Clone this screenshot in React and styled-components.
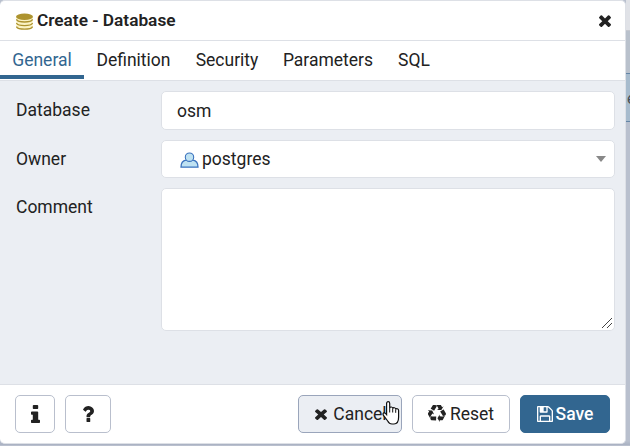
import React from "react";
import styled, { createGlobalStyle } from "styled-components";

const GlobalStyle = createGlobalStyle`
  * { box-sizing: border-box; }
  body { margin: 0; overflow: hidden; background: #c3c9d5; }
  body, button, input, textarea { font-family: Roboto, "Liberation Sans", sans-serif; font-size: 17.5px; color: #222; }
`;

const Screen = styled.div`
  display: grid;
  grid-template-columns: 626px 4px;
  width: 630px;
  height: 446px;
  overflow: hidden;
  background: linear-gradient(#b9c0ce 0 441px, #a9b1c2 445px, #c9ced9 446px);
`;

const Dialog = styled.div`
  display: flex;
  flex-direction: column;
  width: 626px;
  height: 444px;
  background: #fff;
  border: 1px solid #dde0e6;
  border-left: 0;
  border-radius: 5px;
  overflow: hidden;
`;

const Header = styled.header`
  display: flex;
  align-items: center;
  height: 40px;
  flex: none;
  padding: 0 14px 1px 16px;
  border-bottom: 1px solid #dde0e6;
`;

const Title = styled.h1`
  flex: 1;
  margin: 0 0 0 4px;
  font-size: 17.25px;
  line-height: 38px;
  font-weight: 600;
  white-space: nowrap;
`;

const IconButton = styled.button`
  display: flex;
  padding: 0;
  border: 0;
  background: none;
`;

const Tabs = styled.nav`
  display: flex;
  height: 40px;
  flex: none;
  border-bottom: 1px solid #dde0e6;
`;

const Tab = styled.button`
  height: 38px;
  width: ${(p) => p.$width}px;
  padding: 4px 0 0;
  border: 0;
  border-bottom: 4px solid ${(p) => (p.$active ? "#326690" : "transparent")};
  background: none;
  line-height: 30px;
  color: ${(p) => (p.$active ? "#326690" : "#222")};
  white-space: nowrap;
`;

const Form = styled.main`
  display: flex;
  flex-direction: column;
  gap: 10px;
  flex: 1;
  padding: 10px 10px 0 16px;
  background: #ebeef3;
`;

const Field = styled.div`
  display: grid;
  grid-template-columns: 145px 454px;
  align-items: start;
`;

const Label = styled.label`
  line-height: 38px;
`;

const TextInput = styled.input`
  height: 39px;
  padding: 1px 15px 0;
  border: 1px solid #dde0e6;
  border-radius: 5px;
  outline: 0;
  background: #fff;
`;

const Select = styled.div`
  display: flex;
  align-items: center;
  height: 38px;
  padding: 0 8px 0 18px;
  border: 1px solid #dde0e6;
  border-radius: 5px;
  background: #fff;

  > svg:first-child { margin-top: 2px; }
`;

const SelectValue = styled.span`
  flex: 1;
  margin-left: 3px;
  padding-bottom: 1px;
`;

const Comment = styled.div`
  display: flex;
  justify-content: flex-end;
  align-items: flex-end;
  height: 143px;
  padding: 2px;
  border: 1px solid #dde0e6;
  border-radius: 5px;
  background: #fff;
`;

const Footer = styled.footer`
  display: flex;
  gap: 10px;
  height: 59px;
  flex: none;
  padding: 10px 15px;
  border-top: 1px solid #dde0e6;
`;

const Button = styled.button`
  display: flex;
  align-items: center;
  justify-content: center;
  gap: ${(p) => p.$gap ?? 4}px;
  width: ${(p) => p.$width}px;
  height: 38px;
  padding: 0 0 1px ${(p) => (p.$hover ? 2 : 0)}px;
  border: 1px solid ${(p) => (p.$primary ? "#326690" : p.$hover ? "#9aa5bb" : "#b9bfcd")};
  border-radius: 5px;
  background: ${(p) => (p.$primary ? "#326690" : p.$hover ? "#ebeef3" : "#fff")};
  color: ${(p) => (p.$primary ? "#fff" : "#222")};
  font-weight: ${(p) => (p.$primary ? 500 : 400)};
  white-space: nowrap;
`;

const Spacer = styled.div`
  flex: 1;
`;

const Pointer = styled.svg`
  position: absolute;
  left: 382px;
  top: 400px;
`;

const Backdrop = styled.aside`
  display: flex;
  flex-direction: column;
  overflow: hidden;
`;

const BackdropBar = styled.div`
  height: 31px;
  background: #e0e2e7;
  border-bottom: 1px solid #c5c8cf;
`;

const BackdropGap = styled.div`
  height: 42px;
  background: #b9c1cc;
`;

const BackdropTab = styled.div`
  height: 49px;
  border: solid #6485a6;
  border-width: 1px 0;
  background: #a7bbcd;
  color: #4b5057;
  line-height: 49px;
  font-size: 16px;
  text-indent: 1px;
`;

const glyphs = {
  times: "M1490 1322q0 40-28 68l-136 136q-28 28-68 28t-68-28l-294-294-294 294q-28 28-68 28t-68-28l-136-136q-28-28-28-68t28-68l294-294-294-294q-28-28-28-68t28-68l136-136q28-28 68-28t68 28l294 294 294-294q28-28 68-28t68 28l136 136q28 28 28 68t-28 68l-294 294 294 294q28 28 28 68z",
  save: "M512 1536h768v-384h-768v384zm896 0h128v-896q0-14-10-38.5t-20-34.5l-281-281q-10-10-34-20t-39-10v416q0 40-28 68t-68 28h-576q-40 0-68-28t-28-68v-416h-128v1280h128v-416q0-40 28-68t68-28h832q40 0 68 28t28 68v416zm-384-928v-320q0-13-9.5-22.5t-22.5-9.5h-192q-13 0-22.5 9.5t-9.5 22.5v320q0 13 9.5 22.5t22.5 9.5h192q13 0 22.5-9.5t9.5-22.5zm640 32v928q0 40-28 68t-68 28h-1344q-40 0-68-28t-28-68v-1344q0-40 28-68t68-28h928q40 0 88 20t76 48l280 280q28 28 48 76t20 88z",
  info: "M1216 1344v128q0 26-19 45t-45 19h-512q-26 0-45-19t-19-45v-128q0-26 19-45t45-19h64v-384h-64q-26 0-45-19t-19-45v-128q0-26 19-45t45-19h384q26 0 45 19t19 45v576h64q26 0 45 19t19 45zm-128-1152v192q0 26-19 45t-45 19h-256q-26 0-45-19t-19-45v-192q0-26 19-45t45-19h256q26 0 45 19t19 45z",
  question: "M1088 1256v240q0 16-12 28t-28 12h-240q-16 0-28-12t-12-28v-240q0-16 12-28t28-12h240q16 0 28 12t12 28zm316-600q0 54-15.5 101t-35 76.5-55 59.5-57.5 43.5-61 35.5q-41 23-68.5 65t-27.5 67q0 17-12 32.5t-28 15.5h-240q-15 0-25.5-18.5t-10.5-37.5v-45q0-83 65-156.5t143-108.5q59-27 84-56t25-76q0-42-46.5-74t-107.5-32q-65 0-108 29-35 25-107 115-13 16-31 16-12 0-25-8l-164-125q-13-10-15.5-25t5.5-28q160-266 464-266 80 0 161 31t146 83 106 127.5 41 158.5z",
  recycle: "M836 1169l-15 368-2 22-420-29q-36-3-67-31.5t-47-65.5q-11-27-14.5-55t4-65 12-55 21.5-64 19-53q78 12 509 28zm-387-586l180 379-147-92q-63 72-111.5 144.5t-72.5 125-39.5 94.5-18.5 63l-4 21-190-357q-17-26-18-56t6-47l8-18q35-63 114-188l-140-86zm1231 517l-188 359q-12 29-36.5 46.5t-43.5 20.5l-18 4q-71 7-219 12l8 164-230-367 211-362 7 173q170 16 283 5t170-33zm-785-924q-47 63-265 435l-317-187-19-12 225-356q20-31 60-45t80-10q24 2 48.5 12t42 21 41.5 33 36 34.5 36 39.500 32 35zm655 307l212 363q18 37 12.5 76t-27.5 74q-13 20-33 37t-38 28-48.5 22-47 16-51.5 14-46 12q-34-72-265-436l313-195zm-143-226l142-83-220 373-419-20 151-86q-34-89-75-166t-75.5-123.5-64.5-80-47-46.5l-17-13 405 1q31-3 58 10.5t39 28.5l11 15q39 61 112 190z",
};

const boxes = {
  times: [302, 238, 1188, 1316],
  save: [128, 128, 1536, 1536],
  info: [576, 128, 640, 1408],
  question: [384, 256, 1024, 1280],
  recycle: [40, 50, 1740, 1650],
};

function Glyph({ name, width, height }) {
  return (
    <svg width={width} height={height} viewBox={boxes[name].join(" ")} preserveAspectRatio="none" fill="currentColor">
      <path d={glyphs[name]} />
    </svg>
  );
}

function DatabaseIcon() {
  return (
    <svg width="17" height="19" viewBox="0 -2.5 17 19">
      <path d="M.4 3v10c0 4 16.200 4 16.200 0V3z" fill="#fbf3c4" />
      <ellipse cx="8.5" cy="3.2" rx="8.5" ry="3.2" fill="#ad932f" />
      <path d="M.4 5.800c1.200 3.600 15 3.600 16.200 0M.4 9.400c1.200 3.600 15 3.600 16.200 0M.4 13c1.200 3.600 15 3.600 16.200 0" fill="none" stroke="#ad932f" strokeWidth="1.300" />
    </svg>
  );
}

function UserIcon() {
  return (
    <svg width="19" height="16" viewBox="0 0 19 16">
      <path d="M1 15.2c0-4 2.1-6.7 5-7.1 2 1.5 5 1.5 7 0 2.9.4 5 3.1 5 7.1z" fill="#bfe2f2" stroke="#3b72bd" strokeWidth="1.3" />
      <circle cx="9.5" cy="5.2" r="4.2" fill="#bfe2f2" stroke="#3b72bd" strokeWidth="1.1" />
    </svg>
  );
}

const tabs = [["General", 84], ["Definition", 99], ["Security", 88], ["Parameters", 114], ["SQL", 58]];

export default function App() {
  return (
    <>
      <GlobalStyle />
      <Screen>
        <Dialog>
          <Header>
            <DatabaseIcon />
            <Title>Create - Database</Title>
            <IconButton aria-label="Close"><Glyph name="times" width={12} height={13} /></IconButton>
          </Header>
          <Tabs>
            {tabs.map(([name, width], i) => <Tab key={name} $width={width} $active={i === 0}>{name}</Tab>)}
          </Tabs>
          <Form>
            <Field>
              <Label>Database</Label>
              <TextInput defaultValue="osm" />
            </Field>
            <Field>
              <Label>Owner</Label>
              <Select>
                <UserIcon />
                <SelectValue>postgres</SelectValue>
                <svg width="10" height="6"><path d="M0 0h10L5 6z" fill="#888" /></svg>
              </Select>
            </Field>
            <Field>
              <Label>Comment</Label>
              <Comment>
                <svg width="10" height="10"><path d="M0 10 10 0M5 10 10 5" stroke="#444" /></svg>
              </Comment>
            </Field>
          </Form>
          <Footer>
            <Button $width={40} aria-label="Information"><Glyph name="info" width={9} height={18} /></Button>
            <Button $width={46} aria-label="Help"><Glyph name="question" width={12} height={16} /></Button>
            <Spacer />
            <Button $width={104} $hover $gap={6}><Glyph name="times" width={12} height={12} />Cancel</Button>
            <Button $width={98}><Glyph name="recycle" width={18} height={17} />Reset</Button>
            <Button $width={90} $primary $gap={3}><Glyph name="save" width={16} height={16} />Save</Button>
          </Footer>
        </Dialog>
        <Backdrop>
          <BackdropBar />
          <BackdropGap />
          <BackdropTab>e</BackdropTab>
        </Backdrop>
      </Screen>
      <Pointer width="18" height="26" viewBox="0 0 18 26">
        <path d="M4.600 14.500V3.400C4.600 1.100 7.700 1.100 7.700 3.400V8c.5-1.500 3-1.300 3 .5.600-1.300 3-1 3 .8.600-1.200 2.900-.8 2.900 1.200V17c0 4.500-2 7-4.600 7H10c-2 0-3.400-1.200-4.300-3L1.300 15.200C.3 12.800 2.400 11.800 4.600 14.500z" fill="#fff" stroke="#111" strokeWidth="1.200" />
        <path d="M7.700 8v4.500M10.700 8.500v4M13.700 9.300v3.500" stroke="#111" />
      </Pointer>
    </>
  );
}
